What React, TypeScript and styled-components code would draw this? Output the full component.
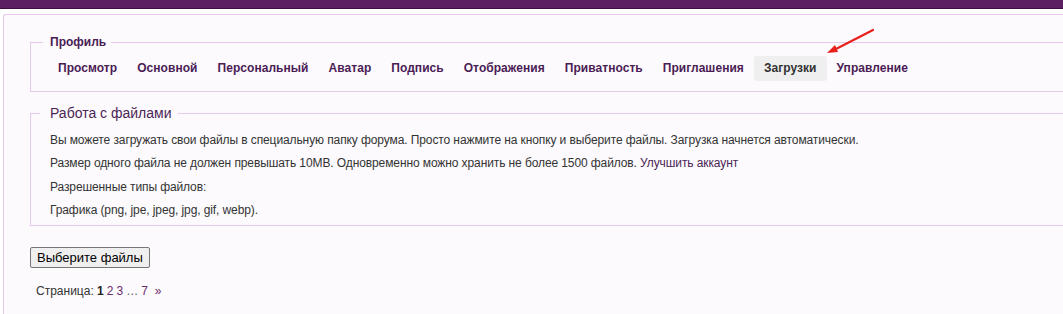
import React from 'react';
import styled, { createGlobalStyle } from 'styled-components';

const GlobalStyle = createGlobalStyle`
  html, body {
    margin: 0;
    padding: 0;
    background: #ffffff;
    overflow: hidden;
  }
  body {
    font-family: 'Liberation Sans', Arial, sans-serif;
    font-size: 12px;
    color: #333333;
  }
`;

const Page = styled.div`
  position: relative;
  width: 1100px;
`;

const TopBar = styled.div`
  height: 8px;
  background: #5c1f5f;
  border-bottom: 1px solid #3d0f40;
`;

const Panel = styled.main`
  margin: 5px 0 0 3px;
  padding: 20px 0 30px 26px;
  background: #fcfafd;
  border: 1px solid #e6c8ec;
  border-right: none;
  border-top-left-radius: 3px;
`;

const Fieldset = styled.fieldset<{ $pad: string }>`
  margin: 0;
  min-width: 0;
  padding: ${(p) => p.$pad};
  border: 1px solid #e6c8ec;
  border-right: none;
`;

const ProfileLegend = styled.legend`
  padding: 0 5px 0 7px;
  font-weight: 700;
  font-size: 12px;
  line-height: 15px;
  color: #4b1c55;
`;

const FilesLegend = styled.legend`
  margin-left: -10px;
  padding: 0 6px 0 10px;
  font-size: 14px;
  line-height: 17px;
  color: #4b2556;
`;

const Tabs = styled.nav`
  display: flex;
  margin-left: 5px;
`;

const Tab = styled.a<{ $active?: boolean }>`
  display: block;
  height: 25px;
  line-height: 25px;
  padding: 0 10px;
  border-radius: 3px;
  font-weight: 700;
  letter-spacing: 0.05px;
  text-decoration: none;
  color: ${(p) => (p.$active ? '#333333' : '#4b1c55')};
  background: ${(p) => (p.$active ? '#efefef' : 'transparent')};
  cursor: pointer;
`;

const Files = styled(Fieldset)`
  margin-top: 13px;
`;

const Line = styled.p`
  margin: 0;
  line-height: 23.4px;
  letter-spacing: -0.1px;
`;

const Link = styled.a`
  color: #4b2556;
  text-decoration: none;
`;

const PickButton = styled.button`
  display: block;
  margin-top: 21px;
  height: 21px;
  padding: 0 6px;
  font-family: 'Liberation Sans', Arial, sans-serif;
  font-size: 13px;
  color: #000000;
  background: #efefef;
  border: 1px solid #767676;
  border-radius: 2px;
`;

const Pager = styled.div`
  margin: 16px 0 0 6px;
  line-height: 15px;
  color: #333333;
`;

const PageNum = styled.a<{ $current?: boolean }>`
  margin-left: ${(p) => (p.$current ? 0 : 3)}px;
  text-decoration: none;
  font-weight: ${(p) => (p.$current ? 700 : 400)};
  color: ${(p) => (p.$current ? '#222222' : '#6b2a6e')};
`;

const Dots = styled.span`
  margin-left: 3px;
  color: #666666;
`;

const Next = styled(PageNum)`
  margin-left: 7px;
`;

const Arrow = styled.svg`
  position: absolute;
  left: 820px;
  top: 24px;
  pointer-events: none;
`;

const tabs = [
  'Просмотр',
  'Основной',
  'Персональный',
  'Аватар',
  'Подпись',
  'Отображения',
  'Приватность',
  'Приглашения',
  'Загрузки',
  'Управление',
];

export default function App(): React.ReactElement {
  return (
    <Page>
      <GlobalStyle />
      <TopBar />
      <Panel>
        <Fieldset $pad="6px 0 10px 12px">
          <ProfileLegend>Профиль</ProfileLegend>
          <Tabs>
            {tabs.map((t) => (
              <Tab key={t} $active={t === 'Загрузки'}>
                {t}
              </Tab>
            ))}
          </Tabs>
        </Fieldset>
        <Files $pad="7px 0 2px 19px">
          <FilesLegend>Работа с файлами</FilesLegend>
          <Line>
            Вы можете загружать свои файлы в специальную папку форума. Просто нажмите на кнопку и выберите файлы. Загрузка
            начнется автоматически.
          </Line>
          <Line>
            Размер одного файла не должен превышать 10MB. Одновременно можно хранить не более 1500 файлов.{' '}
            <Link>Улучшить аккаунт</Link>
          </Line>
          <Line>Разрешенные типы файлов:</Line>
          <Line>Графика (png, jpe, jpeg, jpg, gif, webp).</Line>
        </Files>
        <PickButton>Выберите файлы</PickButton>
        <Pager>
          Страница: <PageNum $current>1</PageNum>
          <PageNum>2</PageNum>
          <PageNum>3</PageNum>
          <Dots>…</Dots>
          <PageNum>7</PageNum>
          <Next>»</Next>
        </Pager>
      </Panel>
      <Arrow width="60" height="36" viewBox="0 0 60 36">
        <line x1="53" y1="6" x2="14" y2="26" stroke="#e8201c" strokeWidth="2.2" strokeLinecap="round" />
        <path d="M7 29 L15 21 L18 28 Z" fill="#e8201c" />
      </Arrow>
    </Page>
  );
}
